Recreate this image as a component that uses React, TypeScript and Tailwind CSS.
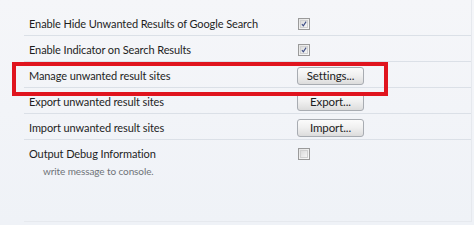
const rows = [
  { label: "Enable Hide Unwanted Results of Google Search", kind: "check", checked: true },
  { label: "Enable Indicator on Search Results", kind: "check", checked: true },
  { label: "Manage unwanted result sites", kind: "button", text: "Settings..." },
  { label: "Export unwanted result sites", kind: "button", text: "Export..." },
  { label: "Import unwanted result sites", kind: "button", text: "Import..." },
];

function CheckBox({ checked }: { checked: boolean }) {
  return (
    <span className="flex size-[12px] items-center justify-center border border-[#9a9a9a] bg-gradient-to-br from-[#e4e4e4] to-[#fafafa] p-[1px]">
      <span className="flex size-full items-center justify-center border border-[#d0d0d0] bg-gradient-to-br from-[#dcdcdc] to-[#f4f4f4]">
        {checked && (
          <svg viewBox="0 0 8 8" className="size-[8px]">
            <path d="M1.2 4.2 L3.1 6.4 L6.8 0.9" fill="none" stroke="#3f4f86" strokeWidth="1.5" />
          </svg>
        )}
      </span>
    </span>
  );
}

function Button({ text }: { text: string }) {
  return (
    <button className="flex h-[18px] w-[67px] items-center justify-center rounded-[3px] border border-[#a8acb2] bg-gradient-to-b from-[#fbfbfb] via-[#efefef] to-[#dcdcdc] text-[11.5px] leading-none text-[#1c1c1c]">
      {text}
    </button>
  );
}

export default function App() {
  return (
    <div
      className="relative h-[225px] w-[474px] overflow-hidden bg-gradient-to-b from-[#f5f6f9] to-[#eff2f7] text-[11px] tracking-[-0.1px] text-[#1e1e1e]"
      style={{ fontFamily: 'Lato, "Open Sans", sans-serif' }}
    >
      <div className="ml-[24px] mr-[2px] h-[222px] border-b border-r border-[#e6e9ee] pt-[10px]">
        {rows.map((row) => (
          <div key={row.label} className="grid h-[26px] grid-cols-[273px_1fr] items-center border-b border-[#dbe0e7]">
            <span className="whitespace-nowrap pl-[5px] pt-[3px]">{row.label}</span>
            <span className="flex items-center pt-[2px]">
              {row.kind === "check" ? (
                <span className="pl-[1px]">
                  <CheckBox checked={!!row.checked} />
                </span>
              ) : (
                <Button text={row.text!} />
              )}
            </span>
          </div>
        ))}
        <div className="grid grid-cols-[273px_1fr] pt-[6px]">
          <div className="pl-[5px]">
            <div className="whitespace-nowrap leading-[16px]">Output Debug Information</div>
            <div className="mt-[2px] whitespace-nowrap pl-[14px] text-[10px] leading-[14px] text-[#6f7378]">write message to console.</div>
          </div>
          <span className="pl-[1px] pt-[2px]">
            <CheckBox checked={false} />
          </span>
        </div>
      </div>
      <div className="absolute left-[12px] top-[62px] h-[34px] w-[376px] border-4 border-[#e0141e]" />
    </div>
  );
}
